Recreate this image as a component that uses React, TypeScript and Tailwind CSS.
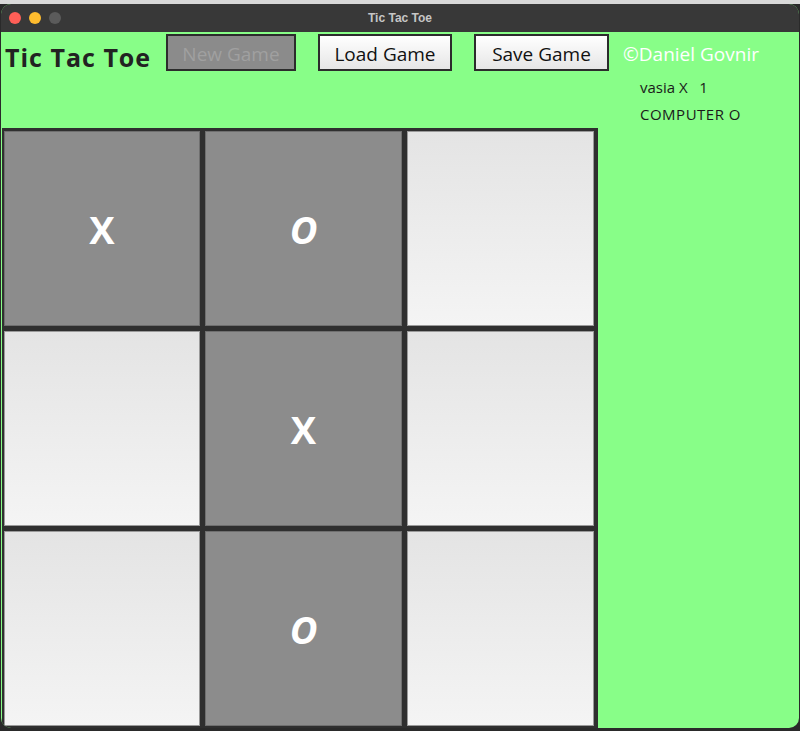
import React from "react";

type Mark = "X" | "O" | "";

const board: Mark[] = ["X", "O", "", "", "X", "", "", "O", ""];

const font = { fontFamily: '"Comic Sans MS", "Open Sans", sans-serif' };

const Cell = ({ mark }: { mark: Mark }) => {
  if (mark) {
    return (
      <div className="flex items-center justify-center bg-[#8c8c8c] border border-[#6f6f6f]">
        <span
          className={`text-[38px] font-bold text-white leading-none ${mark === "O" ? "italic" : ""}`}
        >
          {mark}
        </span>
      </div>
    );
  }
  return <div className="bg-gradient-to-b from-[#e4e4e4] to-[#f4f4f4] border border-[#9a9a9a]" />;
};

const GameButton = ({ label, disabled, w }: { label: string; disabled?: boolean; w: string }) => (
  <button
    className={`${w} h-[37px] pt-[3px] border-2 border-[#2c2c2c] text-[19px] leading-none ${
      disabled
        ? "bg-[#8b8b8b] text-[#a0a0a0]"
        : "bg-gradient-to-b from-[#ffffff] to-[#e6e6e6] text-[#111]"
    }`}
  >
    {label}
  </button>
);

export default function App() {
  return (
    <div className="w-[800px] h-[731px] bg-[#2a2a2a] overflow-hidden" style={font}>
      <div className="h-[4px] bg-[#d9d9d9]" />
      <div className="ml-[1px] w-[798px] h-[724px] rounded-t-[10px] rounded-b-[10px] overflow-hidden flex flex-col bg-[#88fe88]">
        {/* title bar */}
        <div className="h-[28px] bg-[#383838] flex items-center relative shrink-0">
          <div className="flex gap-[8px] pl-[8px]">
            <span className="w-[12px] h-[12px] rounded-full bg-[#fe5f57]" />
            <span className="w-[12px] h-[12px] rounded-full bg-[#febc2e]" />
            <span className="w-[12px] h-[12px] rounded-full bg-[#5b5b5b]" />
          </div>
          <div
            className="absolute inset-0 flex items-center justify-center text-[12px] font-bold text-[#c6c6c6]"
            style={{ fontFamily: '"Liberation Sans", sans-serif' }}
          >
            Tic Tac Toe
          </div>
        </div>

        {/* header */}
        <div className="h-[96px] flex shrink-0">
          <div className="pl-[4px] pt-[7px] w-[165px] text-[25px] font-bold text-[#222] tracking-[1px]">
            Tic Tac Toe
          </div>
          <div className="pt-[2px] flex gap-[22px]">
            <GameButton label="New Game" disabled w="w-[130px]" />
            <GameButton label="Load Game" w="w-[134px]" />
            <GameButton label="Save Game" w="w-[135px]" />
          </div>
          <div className="flex flex-col pl-[14px] pt-[13px]">
            <div className="text-[19px] text-white leading-none">©Daniel Govnir</div>
            <div className="pl-[17px] mt-[16px] text-[15px] text-[#1a1a1a] leading-none">vasia X&nbsp;&nbsp;&nbsp;1</div>
            <div className="pl-[17px] mt-[12px] text-[15px] text-[#1a1a1a] leading-none tracking-[0.5px]">COMPUTER O</div>
          </div>
        </div>

        {/* board */}
        <div className="ml-[1px] w-[596px] h-[600px] bg-[#2f2f2f] pt-[3px] pl-[2px] grid grid-cols-[196px_197px_187px] grid-rows-[195px_195px_195px] gap-[5px]">
          {board.map((m, i) => (
            <Cell key={i} mark={m} />
          ))}
        </div>
      </div>
    </div>
  );
}
